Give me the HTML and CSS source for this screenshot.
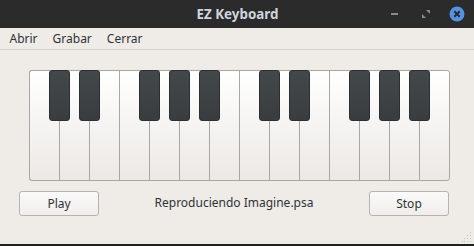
FILE: index.html
```html
<!DOCTYPE html>
<html lang="es">
<head>
    <meta charset="UTF-8">
    <meta name="viewport" content="width=device-width, initial-scale=1.0">
    <title>EZ Keyboard</title>
    <link rel="stylesheet" href="styles.css">
</head>
<body>
    <div class="window">
        <div class="titlebar">
            <span class="title">EZ Keyboard</span>
            <div class="controls">
                <span class="btn-min"></span>
                <svg class="btn-max" width="8" height="8" viewBox="0 0 8 8">
                    <path d="M4 0h4v4z M0 4l4 4h-4z" fill="#8a8a8a"/>
                </svg>
                <svg class="btn-close" width="16" height="16" viewBox="0 0 16 16">
                    <circle cx="8" cy="8" r="7.5" fill="#5294e2"/>
                    <path d="M5.3 5.3l5.4 5.4M10.7 5.3l-5.4 5.4" stroke="#2b2b2b" stroke-width="2"/>
                </svg>
            </div>
        </div>

        <div class="menubar">
            <span class="menu-item">Abrir</span>
            <span class="menu-item">Grabar</span>
            <span class="menu-item">Cerrar</span>
        </div>

        <div class="content">
            <div class="keyboard">
                <div class="white-keys">
                    <div class="white"></div><div class="white"></div><div class="white"></div>
                    <div class="white"></div><div class="white"></div><div class="white"></div>
                    <div class="white"></div><div class="white"></div><div class="white"></div>
                    <div class="white"></div><div class="white"></div><div class="white"></div>
                    <div class="white"></div><div class="white"></div>
                </div>
                <div class="black" style="left: 20px"></div>
                <div class="black" style="left: 50px"></div>
                <div class="black" style="left: 110px"></div>
                <div class="black" style="left: 140px"></div>
                <div class="black" style="left: 170px"></div>
                <div class="black" style="left: 230px"></div>
                <div class="black" style="left: 260px"></div>
                <div class="black" style="left: 320px"></div>
                <div class="black" style="left: 350px"></div>
                <div class="black" style="left: 380px"></div>
            </div>

            <div class="actions">
                <button class="push">Play</button>
                <span class="status">Reproduciendo Imagine.psa</span>
                <button class="push">Stop</button>
            </div>
        </div>

        <svg class="grip" width="10" height="10" viewBox="0 0 10 10">
            <g fill="#c9c4bf">
                <rect x="8" y="0" width="1" height="1"/>
                <rect x="5" y="3" width="1" height="1"/><rect x="8" y="3" width="1" height="1"/>
                <rect x="2" y="6" width="1" height="1"/><rect x="5" y="6" width="1" height="1"/><rect x="8" y="6" width="1" height="1"/>
                <rect x="0" y="9" width="1" height="1"/><rect x="2" y="9" width="1" height="1"/><rect x="5" y="9" width="1" height="1"/><rect x="8" y="9" width="1" height="1"/>
            </g>
        </svg>
    </div>
</body>
</html>
```

FILE: styles.css
```css
body {
    margin: 0;
    font-family: "Noto Sans", sans-serif;
    font-size: 12px;
    color: #2e3436;
}
.window {
    position: relative;
    width: 474px;
    height: 246px;
    box-sizing: border-box;
    background: #efebe7;
    border-bottom: 2px solid #1f1f1f;
}
.titlebar {
    position: relative;
    height: 28px;
    background: #2b2b2b;
    display: flex;
    align-items: center;
    justify-content: center;
}
.title {
    font-weight: bold;
    font-size: 13.4px;
    color: #cfd5de;
    margin-left: 1px;
}
.controls {
    position: absolute;
    right: 9px;
    top: 6px;
    display: flex;
    align-items: center;
    height: 16px;
}
.btn-min {
    width: 7px;
    height: 2px;
    background: #8a8a8a;
    margin-right: 24px;
}
.btn-max {
    margin-right: 19px;
}
.menubar {
    height: 21px;
    border-bottom: 1px solid #d6d1cc;
    display: flex;
    align-items: center;
    padding-left: 2px;
}
.menu-item {
    padding: 0 7.5px;
    color: #2e3436;
}
.content {
    padding: 20px 25px 0 19px;
}
.keyboard {
    position: relative;
    margin-left: 10px;
    width: 421px;
    height: 111px;
}
.white-keys {
    display: flex;
    height: 111px;
}
.white {
    width: 30px;
    height: 111px;
    box-sizing: border-box;
    border: 1px solid #aaa6a2;
    border-right: none;
    background: linear-gradient(to bottom, #ffffff, #ece9e5);
}
.white:first-child {
    border-top-left-radius: 3px;
    border-bottom-left-radius: 3px;
}
.white:last-child {
    width: 31px;
    border-right: 1px solid #aaa6a2;
    border-top-right-radius: 3px;
    border-bottom-right-radius: 3px;
}
.black {
    position: absolute;
    top: 0;
    width: 21px;
    height: 51px;
    box-sizing: border-box;
    border: 1px solid #2b2f31;
    border-radius: 3px;
    background: linear-gradient(to bottom, #43484a, #393d40);
}
.actions {
    display: flex;
    align-items: center;
    justify-content: space-between;
    margin-top: 10px;
}
.push {
    width: 80px;
    height: 25px;
    font-family: "Noto Sans", sans-serif;
    font-size: 12px;
    color: #2e3436;
    border: 1px solid #b8b3ae;
    border-radius: 3px;
    background: linear-gradient(to bottom, #fbfafa, #f0eeeb);
    padding: 0;
}
.status {
    margin-bottom: 3px;
}
.grip {
    position: absolute;
    right: 2px;
    bottom: 2px;
}
```
